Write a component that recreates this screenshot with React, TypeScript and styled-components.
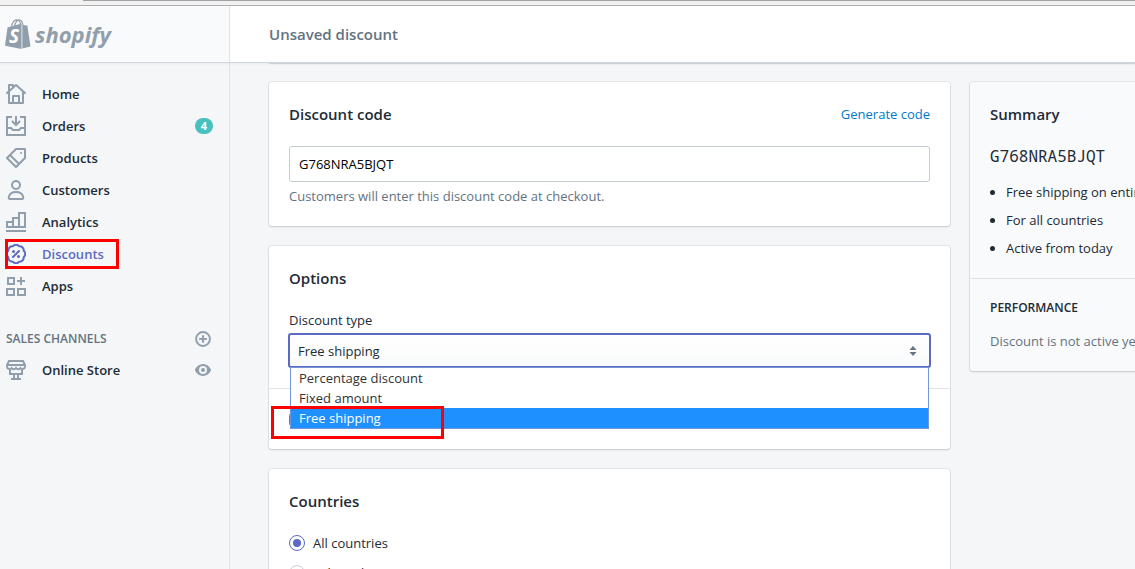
import React, { useState } from "react";
import styled, { createGlobalStyle, css } from "styled-components";

const color = {
  ink: "#212b36",
  subdued: "#637381",
  icon: "#919eab",
  indigo: "#5c6ac4",
  teal: "#47c1bf",
  link: "#007ace",
  line: "#dfe3e8",
  field: "#c4cdd5",
  page: "#f4f6f8",
  pale: "#f9fafb",
  mark: "#ff0000",
};

const GlobalStyle = createGlobalStyle`
  *, *::before, *::after { box-sizing: border-box; }
  body {
    margin: 0;
    overflow: hidden;
    background: ${color.page};
    color: ${color.ink};
    font: 400 14px/20px "Open Sans", "Noto Sans", sans-serif;
  }
  button, input, select { font: inherit; color: inherit; }
  h1, h2, h3, p, ul { margin: 0; padding: 0; }
`;

const Shell = styled.div`
  display: flex;
  flex-direction: column;
  height: 100vh;
  overflow: hidden;
`;

const WindowEdge = styled.div`
  display: flex;
  flex: none;
  height: 6px;
  padding-left: 83px;
  background: #f2f1f2;
  border-bottom: 1px solid #b0aeb0;
  &::before {
    content: "";
    flex: 1;
    height: 1px;
    background: #a3a1a3;
  }
`;

const TopBar = styled.header`
  display: flex;
  flex: none;
  height: 56px;
  background: #fff;
  position: relative;
  z-index: 1;
  box-shadow: 0 1px 0 #d3d6dc, 0 2px 2px rgba(33, 43, 54, 0.06);
`;

const Brand = styled.a`
  display: flex;
  align-items: center;
  gap: 3px;
  width: 230px;
  padding-left: 5px;
  background: ${color.pale};
  border-right: 1px solid ${color.line};
  color: ${color.icon};
  text-decoration: none;
`;

const BrandName = styled.span`
  font: italic 700 22px/28px "Open Sans", "Noto Sans", sans-serif;
`;

const PageTitle = styled.h1`
  align-self: center;
  padding-left: 39px;
  font-size: 15px;
  line-height: 20px;
  font-weight: 600;
  color: ${color.subdued};
`;

const Body = styled.div`
  display: flex;
  flex: 1;
  min-height: 0;
`;

const Sidebar = styled.nav`
  flex: none;
  width: 230px;
  padding: 16px 16px 0 0;
  border-right: 1px solid ${color.line};
`;

const NavList = styled.ul`
  list-style: none;
`;

const NavItem = styled.li`
  display: flex;
  align-items: center;
  position: relative;
`;

const NavLink = styled.a<{ $active?: boolean }>`
  display: flex;
  flex: 1;
  align-items: center;
  gap: 16px;
  height: 32px;
  padding-left: 6px;
  font-size: 13px;
  font-weight: 600;
  color: ${(p) => (p.$active ? color.indigo : color.ink)};
  text-decoration: none;
  svg {
    color: ${(p) => (p.$active ? color.indigo : color.icon)};
  }
`;

const Badge = styled.span`
  width: 18px;
  border-radius: 8px;
  background: ${color.teal};
  color: #fff;
  font-size: 11px;
  line-height: 16px;
  font-weight: 700;
  text-align: center;
`;

const NavHeading = styled.div`
  display: flex;
  align-items: center;
  justify-content: space-between;
  height: 31px;
  margin-top: 21px;
  padding-left: 6px;
  h2 {
    font-size: 12px;
    line-height: 16px;
    font-weight: 600;
    color: ${color.subdued};
  }
`;

const IconButton = styled.button`
  display: flex;
  margin-right: 2px;
  padding: 0;
  border: 0;
  background: none;
  color: ${color.icon};
`;

const highlight = css`
  position: absolute;
  border: 3px solid ${color.mark};
  pointer-events: none;
`;

const NavHighlight = styled.span`
  ${highlight}
  left: 5px;
  top: 1px;
  width: 114px;
  height: 30px;
`;

const OptionHighlight = styled.span`
  ${highlight}
  left: -19px;
  bottom: -10px;
  width: 173px;
  height: 33px;
`;

const Content = styled.main`
  flex: 1;
  min-width: 0;
  overflow: hidden;
  padding-left: 39px;
`;

const CardEnd = styled.div`
  height: 1px;
  margin-bottom: 19px;
  margin-right: -155px;
  box-shadow: 0 1px 1px rgba(63, 63, 68, 0.2);
`;

const Columns = styled.div`
  display: grid;
  grid-template-columns: minmax(0, 1fr) 320px;
  gap: 20px;
  align-items: start;
  margin-right: -155px;
`;

const Stack = styled.div`
  display: flex;
  flex-direction: column;
  gap: 20px;
`;

const Card = styled.section<{ $pale?: boolean }>`
  background: ${(p) => (p.$pale ? color.pale : "#fff")};
  border-radius: 3px;
  box-shadow: 0 0 0 1px rgba(63, 63, 68, 0.08), 0 1px 2px rgba(63, 63, 68, 0.18);
`;

const CardSection = styled.div`
  padding: 20px;
  & + & {
    border-top: 1px solid ${color.line};
  }
`;

const CardHeader = styled.div`
  display: flex;
  align-items: center;
  justify-content: space-between;
  height: 24px;
`;

const CardTitle = styled.h2`
  font-size: 15px;
  line-height: 24px;
  font-weight: 600;
`;

const TextLink = styled.a`
  font-size: 13px;
  color: ${color.link};
  text-decoration: none;
`;

const Field = styled.div`
  display: flex;
  flex-direction: column;
  position: relative;
  margin-top: 20px;
  font-size: 13px;
`;

const TextInput = styled.input`
  width: 100%;
  height: 36px;
  padding: 0 9px;
  border: 1px solid ${color.field};
  border-radius: 3px;
  background: #fff;
  color: #000;
  outline: 0;
`;

const HelpText = styled.p`
  margin-top: 4px;
  font-size: 13px;
  color: ${color.subdued};
`;

const SelectBox = styled.div`
  display: flex;
  align-items: center;
  position: relative;
  height: 35px;
  margin: 3px -1px 0;
  border: 2px solid ${color.indigo};
  border-radius: 3px;
  background: linear-gradient(#fff, ${color.pale});
  select {
    flex: 1;
    align-self: stretch;
    padding: 0 8px;
    border: 0;
    outline: 0;
    background: none;
    appearance: none;
  }
  svg {
    position: absolute;
    right: 12px;
    color: ${color.subdued};
    pointer-events: none;
  }
`;

const Menu = styled.div`
  position: absolute;
  z-index: 2;
  top: 100%;
  left: 1px;
  right: 1px;
  margin-top: -1px;
`;

const OptionList = styled.ul`
  list-style: none;
  border: 1px solid #7296d8;
  background: #fff;
`;

const Option = styled.li<{ $selected?: boolean }>`
  padding: 0 8px;
  font-size: 13px;
  line-height: 20px;
  color: ${(p) => (p.$selected ? "#fff" : "#333")};
  background: ${(p) => (p.$selected ? "#1e90ff" : "transparent")};
`;

const CheckLabel = styled.label`
  display: flex;
  align-items: center;
  min-height: 20px;
  input { margin: 0; }
`;

const RadioGroup = styled.div`
  display: flex;
  flex-direction: column;
  gap: 10px;
  margin-top: 20px;
`;

const RadioLabel = styled.label`
  display: flex;
  align-items: center;
  gap: 8px;
  font-size: 13px;
  input {
    appearance: none;
    display: grid;
    place-items: center;
    width: 16px;
    height: 16px;
    margin: 0;
    border: 1px solid ${color.field};
    border-radius: 50%;
    background: #fff;
  }
  input:checked {
    border-color: ${color.indigo};
  }
  input:checked::before {
    content: "";
    width: 8px;
    height: 8px;
    border-radius: 50%;
    background: ${color.indigo};
  }
`;

const SummaryCode = styled.p`
  margin-top: 20px;
  font: 400 16px/20px "Noto Sans Mono", "DejaVu Sans Mono", monospace;
`;

const SummaryList = styled.ul`
  display: flex;
  flex-direction: column;
  gap: 8px;
  margin-top: 16px;
  padding-left: 16px;
  font-size: 13px;
`;

const SmallHeading = styled.h3`
  font-size: 12px;
  line-height: 18px;
  font-weight: 600;
`;

const Muted = styled.p`
  margin-top: 14px;
  font-size: 13px;
  color: ${color.subdued};
`;

const Icon = ({ children, size = 20 }: { children: React.ReactNode; size?: number }) => (
  <svg width={size} height={size} viewBox="0 0 20 20" fill="currentColor" aria-hidden="true">
    {children}
  </svg>
);

const line = { fill: "none", stroke: "currentColor", strokeWidth: 2 } as const;

const HomeIcon = () => (
  <Icon>
    <path d="M19.664 8.252l-9-8a1 1 0 0 0-1.328 0L8 1.440V1a1 1 0 0 0-1-1H3a1 1 0 0 0-1 1v5.773L.336 8.252a1 1 0 1 0 1.328 1.495L2 9.449V19a1 1 0 0 0 1 1h14a1 1 0 0 0 1-1V9.449l.336.298a1 1 0 1 0 1.328-1.495zM12 18H8v-5h4v5zm4 0h-2v-6a1 1 0 0 0-1-1H7a1 1 0 0 0-1 1v6H4V7.671l6-5.333 6 5.333V18zM4 2h2v1.218L4 4.995V2z" />
  </Icon>
);

const OrdersIcon = () => (
  <Icon>
    <path {...line} d="M6 1H1v18h18V1h-5M1 12h4l2 2h6l2-2h4M10 0v8M6 5l4 4 4-4" />
  </Icon>
);

const ProductsIcon = () => (
  <Icon>
    <path d="M19 0h-9a1 1 0 0 0-.707.293l-9 9a1 1 0 0 0 0 1.414l9 9a1 1 0 0 0 1.414 0l9-9A1 1 0 0 0 20 10V1a1 1 0 0 0-1-1zm-9 17.586L2.414 10 4 8.414 11.586 16 10 17.586zm8-8l-5 5L5.414 7l5-5H18v7.586zM15 6a1 1 0 1 0 0-2 1 1 0 0 0 0 2" />
  </Icon>
);

const CustomersIcon = () => (
  <Icon>
    <circle {...line} cx="10" cy="5" r="4" />
    <path {...line} d="M4 19c-1 0-1.500-.8-1.200-2C3.500 14 6 12 10 12s6.500 2 7.200 5c.3 1.200-.2 2-1.200 2z" />
  </Icon>
);

const AnalyticsIcon = () => (
  <Icon>
    <path {...line} d="M0 19h20M1 15v-5h6v5zM7 15V6h6v9zM13 15V1h6v14z" />
  </Icon>
);

const DiscountsIcon = () => (
  <Icon>
    <path
      {...line}
      strokeLinejoin="round"
      d="M17.670 13.180A4 4 0 0 1 13.180 17.670A4 4 0 0 1 6.820 17.670A4 4 0 0 1 2.330 13.180A4 4 0 0 1 2.330 6.820A4 4 0 0 1 6.820 2.330A4 4 0 0 1 13.180 2.330A4 4 0 0 1 17.670 6.820A4 4 0 0 1 17.670 13.180z"
    />
    <path {...line} strokeLinecap="round" d="M13 7l-6 6" />
    <circle cx="7.500" cy="7.500" r="1.500" />
    <circle cx="12.500" cy="12.500" r="1.500" />
  </Icon>
);

const AppsIcon = () => (
  <Icon>
    <path {...line} d="M2 2h6v6H2zM1 13h7v6H1zM12 13h7v6h-7zM15 1v8M11 5h8" />
  </Icon>
);

const StoreIcon = () => (
  <Icon>
    <path {...line} d="M3 1h14l2 4v1.500a2.500 2.500 0 0 1-4.500 1.500 2.800 2.800 0 0 1-4.500 0 2.800 2.800 0 0 1-4.500 0A2.500 2.500 0 0 1 1 6.500V5zM1 5h18M4 9v5h12V9M8 14v4M12 14v4M5 19h10" />
  </Icon>
);

const PlusIcon = () => (
  <Icon size={16}>
    <circle {...line} strokeWidth={2.4} cx="10" cy="10" r="8.700" />
    <path {...line} strokeWidth={2.6} d="M10 5.200v9.600M5.200 10h9.600" />
  </Icon>
);

const EyeIcon = () => (
  <svg width="16" height="16" viewBox="0 0 16 16" fill="currentColor" aria-hidden="true">
    <path
      fillRule="evenodd"
      d="M8 2C3.400 2 .7 6 .1 7.500a1.200 1.200 0 0 0 0 1C.7 10 3.400 14 8 14s7.300-4 7.900-5.500a1.200 1.200 0 0 0 0-1C15.300 6 12.600 2 8 2zm0 10a4 4 0 1 1 0-8 4 4 0 0 1 0 8z"
    />
    <circle cx="8" cy="8" r="2" />
  </svg>
);

const UpDownIcon = () => (
  <svg width="8" height="12" viewBox="0 0 8 12" fill="currentColor" aria-hidden="true">
    <path d="M4 1l3.500 4h-7zM4 11l3.500-4h-7z" />
  </svg>
);

const BagLogo = () => (
  <svg width="27" height="32" viewBox="0 0 27 32" aria-hidden="true">
    <path fill="none" stroke={color.icon} strokeWidth="1.200" d="M6.500 8.500C7.500 4 10 1.500 12.500 2c2 .4 3 2.500 3.200 5M9.500 8C10.500 4 12.500 1.500 15 2c1.800.4 2.400 2 2.600 4" />
    <path fill={color.icon} d="M2.500 9.500L16.500 5.500V31L0 27.700z" />
    <path fill={color.icon} d="M17.300 5.400l2 1.800 3 .3L25.500 28.500 17.300 30.600z" />
    <text x="4" y="24.500" fill="#fff" fontFamily="Open Sans, sans-serif" fontSize="19" fontWeight="700" fontStyle="italic">
      S
    </text>
  </svg>
);

const navItems = [
  { label: "Home", icon: <HomeIcon /> },
  { label: "Orders", icon: <OrdersIcon />, count: 4 },
  { label: "Products", icon: <ProductsIcon /> },
  { label: "Customers", icon: <CustomersIcon /> },
  { label: "Analytics", icon: <AnalyticsIcon /> },
  { label: "Discounts", icon: <DiscountsIcon />, active: true },
  { label: "Apps", icon: <AppsIcon /> },
];

const discountTypes = ["Percentage discount", "Fixed amount", "Free shipping"];

export default function App() {
  const [code, setCode] = useState("G768NRA5BJQT");
  const [type, setType] = useState("Free shipping");
  const [scope, setScope] = useState("all");

  return (
    <Shell>
      <GlobalStyle />
      <WindowEdge />
      <TopBar>
        <Brand href="#home">
          <BagLogo />
          <BrandName>shopify</BrandName>
        </Brand>
        <PageTitle>Unsaved discount</PageTitle>
      </TopBar>
      <Body>
        <Sidebar>
          <NavList>
            {navItems.map((item) => (
              <NavItem key={item.label}>
                <NavLink href={`#${item.label.toLowerCase()}`} $active={item.active}>
                  {item.icon}
                  {item.label}
                </NavLink>
                {item.count && <Badge>{item.count}</Badge>}
                {item.active && <NavHighlight />}
              </NavItem>
            ))}
          </NavList>
          <NavHeading>
            <h2>SALES CHANNELS</h2>
            <IconButton type="button" aria-label="Add sales channel">
              <PlusIcon />
            </IconButton>
          </NavHeading>
          <NavItem as="div">
            <NavLink href="#online-store">
              <StoreIcon />
              Online Store
            </NavLink>
            <IconButton type="button" aria-label="View online store">
              <EyeIcon />
            </IconButton>
          </NavItem>
        </Sidebar>
        <Content>
          <CardEnd />
          <Columns>
            <Stack>
              <Card>
                <CardSection>
                  <CardHeader>
                    <CardTitle as="label" htmlFor="code">
                      Discount code
                    </CardTitle>
                    <TextLink href="#generate">Generate code</TextLink>
                  </CardHeader>
                  <Field>
                    <TextInput id="code" value={code} onChange={(e) => setCode(e.target.value)} />
                    <HelpText>Customers will enter this discount code at checkout.</HelpText>
                  </Field>
                </CardSection>
              </Card>
              <Card>
                <CardSection>
                  <CardTitle>Options</CardTitle>
                  <Field>
                    <label htmlFor="type">Discount type</label>
                    <SelectBox>
                      <select id="type" value={type} onChange={(e) => setType(e.target.value)}>
                        {discountTypes.map((name) => (
                          <option key={name}>{name}</option>
                        ))}
                      </select>
                      <UpDownIcon />
                    </SelectBox>
                    <Menu>
                      <OptionList role="listbox" aria-label="Discount type">
                        {discountTypes.map((name) => (
                          <Option
                            key={name}
                            role="option"
                            aria-selected={name === type}
                            $selected={name === type}
                            onClick={() => setType(name)}
                          >
                            {name}
                          </Option>
                        ))}
                      </OptionList>
                      <OptionHighlight />
                    </Menu>
                  </Field>
                </CardSection>
                <CardSection>
                  <CheckLabel>
                    <input type="checkbox" aria-label="Exclude shipping rates" />
                  </CheckLabel>
                </CardSection>
              </Card>
              <Card>
                <CardSection>
                  <CardTitle>Countries</CardTitle>
                  <RadioGroup>
                    <RadioLabel>
                      <input type="radio" name="scope" checked={scope === "all"} onChange={() => setScope("all")} />
                      All countries
                    </RadioLabel>
                    <RadioLabel>
                      <input type="radio" name="scope" checked={scope === "some"} onChange={() => setScope("some")} />
                      Selected countries
                    </RadioLabel>
                  </RadioGroup>
                </CardSection>
              </Card>
            </Stack>
            <Card as="aside" $pale>
              <CardSection>
                <CardTitle>Summary</CardTitle>
                <SummaryCode>{code}</SummaryCode>
                <SummaryList>
                  <li>Free shipping on entire order</li>
                  <li>For all countries</li>
                  <li>Active from today</li>
                </SummaryList>
              </CardSection>
              <CardSection>
                <SmallHeading>PERFORMANCE</SmallHeading>
                <Muted>Discount is not active yet.</Muted>
              </CardSection>
            </Card>
          </Columns>
        </Content>
      </Body>
    </Shell>
  );
}
